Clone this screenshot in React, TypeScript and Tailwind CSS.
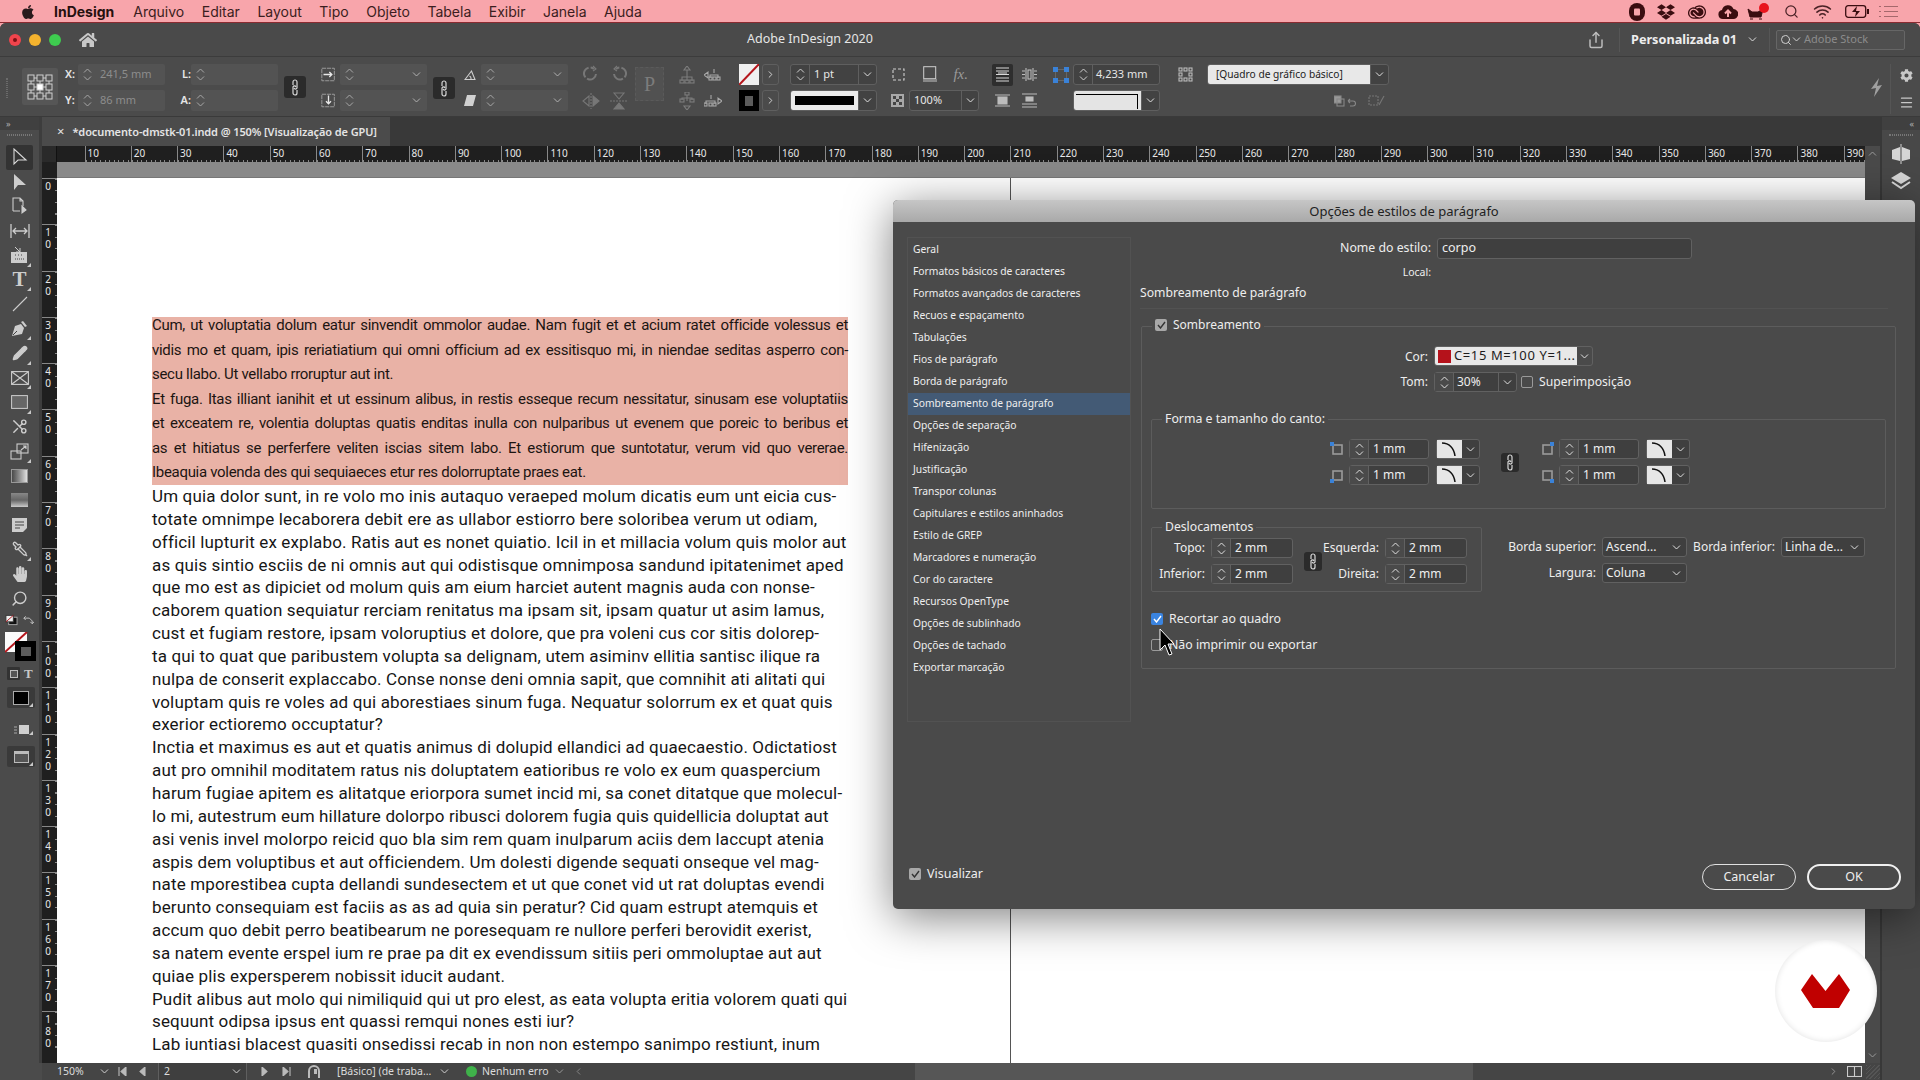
import React from 'react';
import { FaApple, FaDropbox, FaHome, FaCog, FaHandPaper } from 'react-icons/fa';
import { SiAdobecreativecloud } from 'react-icons/si';
import { Wifi, Search, Scissors, Pipette, Share, Pencil, ChevronLeft, ChevronRight, Menu } from 'lucide-react';

const Up = ({ c = '#d0d0d0' }: { c?: string }) => (
  <svg width="9" height="5" viewBox="0 0 9 5" fill="none" stroke={c} strokeWidth="1"><path d="M1 4.5 4.5 1 8 4.5" /></svg>
);
const Down = ({ c = '#d0d0d0' }: { c?: string }) => (
  <svg width="9" height="5" viewBox="0 0 9 5" fill="none" stroke={c} strokeWidth="1"><path d="M1 .5 4.5 4 8 .5" /></svg>
);
const Stepper = ({ c }: { c?: string }) => (
  <div className="flex h-full w-[18px] shrink-0 flex-col items-center justify-center gap-[3px]">
    <Up c={c} /><Down c={c} />
  </div>
);
const LinkIcon = () => (
  <svg width="8" height="17" viewBox="0 0 8 17" fill="none" stroke="#d8d8d8" strokeWidth="1.2">
    <path d="M2 6V3a2 2 0 0 1 4 0v6a1.6 1.6 0 0 1-3 0" />
    <path d="M6 11v3a2 2 0 0 1-4 0V8a1.6 1.6 0 0 1 3 0" />
  </svg>
);
const LinkBtn = ({ className }: { className: string }) => (
  <div className={`flex items-center justify-center rounded-[3px] bg-[#2b2b2b] ${className}`}><LinkIcon /></div>
);

/* top control bar */
const CtlField = ({ value, dd }: { value?: string; dd?: boolean }) => (
  <div className="flex h-[21px] w-[87px] items-center rounded-[2px] bg-[#535353]">
    <Stepper c="#a8a8a8" />
    <span className="ml-[4px] flex-1 text-[11px] text-[#8d8d8d]">{value}</span>
    {dd && <span className="mr-[6px]"><Down c="#b0b0b0" /></span>}
  </div>
);
const DarkField = ({ children, className }: { children: React.ReactNode; className: string }) => (
  <div className={`flex h-[21px] items-center overflow-hidden rounded-[3px] border border-[#5f5f5f] bg-[#424242] ${className}`}>{children}</div>
);
const DdEnd = ({ className = 'w-[18px]' }: { className?: string }) => (
  <div className={`flex h-full shrink-0 items-center justify-center border-l border-[#5f5f5f] ${className}`}><Down c="#e0e0e0" /></div>
);
const RefPoint = () => (
  <svg width="26" height="26" viewBox="0 0 26 26" fill="none" stroke="#cfcfcf" strokeWidth="1">
    {[1, 10, 19].map((y) => [1, 10, 19].map((x) => (
      <rect key={`${x}-${y}`} x={x} y={y} width="6" height="6" fill={x === 10 && y === 10 ? '#fff' : 'none'} />
    )))}
    <path d="M7 4h3M16 4h3M7 13h3M16 13h3M7 22h3M16 22h3M4 7v3M13 7v3M22 7v3M4 16v3M13 16v3M22 16v3" />
  </svg>
);
const G = ({ children, w = 18, h = 18, vb = '0 0 18 18', c = '#a0a0a0', f = 'none' }: { children: React.ReactNode; w?: number; h?: number; vb?: string; c?: string; f?: string }) => (
  <svg width={w} height={h} viewBox={vb} fill={f} stroke={c} strokeWidth="1.1">{children}</svg>
);
const ArrowBtn = () => (
  <div className="ml-[3px] flex h-[21px] w-[17px] items-center justify-center rounded-[3px] border border-[#5f5f5f]"><ChevronRight size={11} color="#ddd" /></div>
);

const ControlBar = () => (
  <div className="flex h-[60px] shrink-0 items-start border-b border-[#3a3a3a] bg-[#4b4b4b] pt-[7px] text-[#e6e6e6]">
    <div className="ml-[6px] mt-[14px] h-[20px] w-[2px] border-x border-dotted border-[#6a6a6a]" />
    <div className="ml-[14px] mt-[4px] flex h-[37px] w-[36px] items-center justify-center rounded-[2px] bg-[#565656]"><RefPoint /></div>
    <div className="ml-[7px] flex flex-col gap-[5px]">
      <div className="flex items-center"><span className="w-[13px] text-[11px] font-semibold">X:</span><CtlField value="241,5 mm" /></div>
      <div className="flex items-center"><span className="w-[13px] text-[11px] font-semibold">Y:</span><CtlField value="86 mm" /></div>
    </div>
    <div className="ml-[10px] flex flex-col gap-[5px]">
      <div className="flex items-center"><span className="w-[16px] text-right text-[11px] font-semibold">L:</span><CtlField /></div>
      <div className="flex items-center"><span className="w-[16px] text-right text-[11px] font-semibold">A:</span><CtlField /></div>
    </div>
    <LinkBtn className="ml-[6px] mt-[12px] h-[22px] w-[22px]" />
    <div className="ml-[15px] flex flex-col gap-[5px]">
      <div className="flex items-center">
        <span className="flex w-[19px]"><G w={15} h={15}><rect x="1" y="1.5" width="15" height="15" strokeDasharray="5 1" /><path d="M3 9h10M10 6l3 3-3 3" stroke="#e8e8e8" strokeWidth="1.6" /></G></span>
        <CtlField dd />
      </div>
      <div className="flex items-center">
        <span className="flex w-[19px]"><G w={15} h={15}><rect x="1" y="1.5" width="15" height="15" strokeDasharray="5 1" /><path d="M9 3v10M6 10l3 3 3-3" stroke="#e8e8e8" strokeWidth="1.6" /></G></span>
        <CtlField dd />
      </div>
    </div>
    <LinkBtn className="ml-[6px] mt-[13px] h-[22px] w-[22px]" />
    <div className="ml-[9px] flex flex-col gap-[5px]">
      <div className="flex items-center">
        <span className="flex w-[17px]"><G w={12} h={12} vb="0 0 12 12" c="#cfcfcf"><path d="M1 10.5h10L7.5 2 1 10.5ZM7 10a3 3 0 0 0-1.5-3" /></G></span>
        <CtlField dd />
      </div>
      <div className="flex items-center">
        <span className="flex w-[17px]"><svg width="12" height="11" viewBox="0 0 12 11"><path d="M3 0h9L9 11H0Z" fill="#d0d0d0" /></svg></span>
        <CtlField dd />
      </div>
    </div>
    <div className="ml-[11px] flex w-[52px] flex-col gap-[5px]">
      <div className="flex h-[21px] items-center justify-between px-[2px]">
        <G w={20} h={20} vb="0 0 20 20" c="#777"><path d="M15 9a6 6 0 1 1-2-5" strokeWidth="2" strokeDasharray="12 2" /><path d="M12 1l3 3-3 2" /></G>
        <G w={20} h={20} vb="0 0 20 20" c="#777"><path d="M5 9a6 6 0 1 0 2-5" strokeWidth="2" strokeDasharray="12 2" /><path d="M8 1 5 4l3 2" /></G>
      </div>
      <div className="flex h-[21px] items-center justify-between px-[2px]">
        <G w={20} h={18} vb="0 0 20 18" c="#777"><path d="M10 1v16" strokeDasharray="2 1" /><path d="M8 4v10L2 9Z" /><path d="M12 4v10l6-5Z" fill="#777" /></G>
        <G w={20} h={18} vb="0 0 20 18" c="#777"><path d="M1 9h18" strokeDasharray="2 1" /><path d="M5 1h10l-5 6Z" /><path d="M5 17h10l-5-6Z" fill="#777" /></G>
      </div>
    </div>
    <div className="ml-[4px] mt-[3px] flex h-[34px] w-[29px] items-center justify-center border border-dashed border-[#5a5a5a] bg-[#515151] font-['Liberation_Serif',serif] text-[20px] text-[#7c7c7c]">P</div>
    <div className="ml-[10px] flex w-[53px] flex-col gap-[5px]">
      <div className="flex h-[21px] items-center justify-between px-[5px]">
        <G w={16} h={18} vb="0 0 16 18" c="#7d7d7d"><path d="M8 0l3 4H5ZM8 4v5M3 15V11h10v4M8 9v6" /><rect x="1" y="14" width="4" height="3" /><rect x="6" y="14" width="4" height="3" /><rect x="11" y="14" width="4" height="3" /></G>
        <G w={18} h={14} vb="0 0 18 14" c="#a8a8a8"><path d="M0 7l4-3v6ZM10 1v4M6 10V7h8v3" /><rect x="5" y="9" width="3" height="3" /><rect x="9" y="9" width="3" height="3" /><rect x="13" y="9" width="3" height="3" /></G>
      </div>
      <div className="flex h-[21px] items-center justify-between px-[5px]">
        <G w={16} h={18} vb="0 0 16 18" c="#7d7d7d"><rect x="6" y="0" width="4" height="3" /><path d="M3 8V6h10v2M8 3v6" /><rect x="1" y="7" width="4" height="3" /><rect x="11" y="7" width="4" height="3" /><path d="M8 18l3-4H5Z" /></G>
        <G w={18} h={14} vb="0 0 18 14" c="#a8a8a8"><path d="M18 7l-4-3v6ZM7 1v4M2 10V7h9v3" /><rect x="0" y="9" width="3" height="3" /><rect x="5" y="9" width="3" height="3" /><rect x="9" y="9" width="3" height="3" /></G>
      </div>
    </div>
    <div className="ml-[12px] flex flex-col gap-[5px]">
      <div className="flex items-center">
        <svg width="20" height="21" viewBox="0 0 20 21"><rect width="20" height="21" fill="#f0f0f0" /><path d="M0 21 20 0" stroke="#b5161c" strokeWidth="2" /></svg>
        <ArrowBtn />
      </div>
      <div className="flex items-center">
        <div className="flex h-[21px] w-[20px] items-center justify-center bg-black"><div className="h-[10px] w-[8px] bg-[#5b5b5b]" /></div>
        <ArrowBtn />
      </div>
    </div>
    <div className="ml-[11px] flex flex-col gap-[5px]">
      <DarkField className="w-[87px]"><div className="flex h-full border-r border-[#5f5f5f]"><Stepper /></div><span className="ml-[4px] flex-1 text-[11px]">1 pt</span><DdEnd /></DarkField>
      <DarkField className="w-[87px]"><div className="flex h-full flex-1 items-center bg-[#eaeaea] px-[4px]"><div className="h-[9px] w-full bg-black" /></div><DdEnd /></DarkField>
    </div>
    <div className="ml-[10px] flex w-[93px] flex-col gap-[5px]">
      <div className="flex h-[21px] items-center justify-between px-[4px]">
        <G w={16} h={16} vb="0 0 16 16" c="#cfcfcf"><rect x="2" y="2" width="11" height="11" strokeDasharray="3 2" /></G>
        <svg width="14" height="17" viewBox="0 0 14 17"><rect x=".7" y=".7" width="12" height="12" fill="none" stroke="#cfcfcf" /><rect y="13" width="14" height="3" fill="#888" /></svg>
        <span className="mr-[8px] font-['Liberation_Serif',serif] text-[15px] italic text-[#9a9a9a]">fx.</span>
      </div>
      <div className="flex items-center">
        <svg width="13" height="13" viewBox="0 0 13 13" className="ml-[4px]"><rect width="13" height="13" fill="#a8a8a8" /><rect x="2" y="2" width="3" height="3" fill="#444" /><rect x="8" y="2" width="3" height="3" fill="#444" /><rect x="5" y="5" width="3" height="3" fill="#444" /><rect x="2" y="8" width="3" height="3" fill="#444" /><rect x="8" y="8" width="3" height="3" fill="#444" /></svg>
        <DarkField className="ml-[5px] w-[70px]"><span className="ml-[4px] flex-1 text-[11px]">100%</span><DdEnd className="w-[17px]" /></DarkField>
      </div>
    </div>
    <div className="ml-[12px] flex w-[53px] flex-col gap-[5px]">
      <div className="flex h-[21px] items-center">
        <div className="flex h-[22px] w-[21px] items-center justify-center rounded-[2px] bg-[#2e2e2e]"><G w={15} h={15} vb="0 0 15 15" c="#d8d8d8"><path d="M1 1h13M1 14h13M1 4h13M1 7.5h13M1 11h13M3 6h9" /></G></div>
        <span className="ml-[9px]"><G w={15} h={15} vb="0 0 15 15" c="#bcbcbc"><path d="M4 1v13M11 1v13M0 4h3M0 7.5h3M0 11h3M12 4h3M12 7.5h3M12 11h3" /><rect x="6" y="3" width="3" height="9" /></G></span>
      </div>
      <div className="flex h-[21px] items-center">
        <span className="ml-[3px]"><G w={15} h={15} vb="0 0 15 15" c="#bcbcbc"><path d="M0 2h15M0 13h15" /><rect x="3" y="4" width="9" height="7" fill="#bcbcbc" /></G></span>
        <span className="ml-[12px]"><G w={15} h={15} vb="0 0 15 15" c="#bcbcbc"><path d="M0 1h15M0 11h15M0 14h15" /><rect x="4" y="4" width="7" height="4" fill="#bcbcbc" /></G></span>
      </div>
    </div>
    <div className="ml-[8px] flex w-[107px] flex-col gap-[5px]">
      <div className="flex items-center justify-between">
        <svg width="16" height="16" viewBox="0 0 16 16"><rect x="2.5" y="2.5" width="11" height="11" fill="none" stroke="#666" /><rect width="5" height="5" fill="#3a82d8" /><rect x="11" width="5" height="5" fill="#3a82d8" /><rect y="11" width="5" height="5" fill="#3a82d8" /><rect x="11" y="11" width="5" height="5" fill="#3a82d8" /></svg>
        <DarkField className="w-[87px]"><div className="flex h-full border-r border-[#5f5f5f]"><Stepper /></div><span className="ml-[3px] text-[11px]">4,233 mm</span></DarkField>
      </div>
      <div className="flex justify-end">
        <DarkField className="w-[87px]"><div className="relative h-full flex-1 bg-[#e4e4e4]"><div className="ml-[2px] mt-[3px] h-[15px] w-[62px] border-r border-t border-black" /></div><DdEnd /></DarkField>
      </div>
    </div>
    <div className="ml-[18px] flex flex-col gap-[5px]">
      <div className="flex items-center">
        <G w={16} h={16} vb="0 0 16 16" c="#bbb"><rect x="1" y="1" width="3" height="3" /><rect x="6" y="1" width="3" height="3" /><rect x="11" y="1" width="3" height="3" /><rect x="1" y="6" width="3" height="3" /><rect x="11" y="6" width="3" height="3" /><rect x="1" y="11" width="3" height="3" /><rect x="6" y="11" width="3" height="3" /><rect x="11" y="11" width="3" height="3" /></G>
        <DarkField className="ml-[13px] w-[182px]"><span className="flex h-full flex-1 items-center whitespace-nowrap bg-[#e8e8e8] pl-[8px] text-[10.2px] text-[#222]">[Quadro de gráfico básico]</span><DdEnd /></DarkField>
      </div>
      <div className="flex h-[21px] items-center justify-end gap-[12px] pr-[4px]">
        <G w={22} h={12} vb="0 0 22 12" c="#888"><rect x="0" y="1" width="7" height="7" fill="#999" /><rect x="3" y="4" width="7" height="7" /><path d="M14 6h5a2.5 2.5 0 0 1 0 5h-3M14 6l2-2M14 6l2 2" /></G>
        <G w={17} h={12} vb="0 0 17 12" c="#777"><rect x="1" y="1" width="9" height="9" strokeDasharray="2 1" /><path d="M16 1l-5 9" /></G>
      </div>
    </div>
    <div className="flex flex-1 justify-end pr-[6px] pt-[14px]">
      <svg width="11" height="19" viewBox="0 0 11 19"><path d="M8 0 0 11l5-1-2 9 8-12-5 1Z" fill="#a0a0a0" /></svg>
    </div>
    <div className="ml-[2px] flex h-[50px] w-[30px] flex-col items-center justify-center gap-[13px] self-start border-l border-[#555] pl-[2px]">
      <FaCog size={13} color="#c8c8c8" />
      <Menu size={15} color="#c8c8c8" />
    </div>
  </div>
);

/* title and menu */
const MenuBar = () => (
  <div className="flex h-[23px] shrink-0 items-center border-b border-[#8a2a30] bg-[#f8a5ab] pt-[1px] font-['Inter',sans-serif] text-[14px] text-[#3b1d20]">
    <FaApple size={16} color="#2a1a1c" className="ml-[20px]" />
    <span className="ml-[18px] font-bold text-[#26100f]">InDesign</span>
    <span className="ml-[19px]">Arquivo</span>
    <span className="ml-[17.5px]">Editar</span>
    <span className="ml-[17.5px]">Layout</span>
    <span className="ml-[17.5px]">Tipo</span>
    <span className="ml-[17.5px]">Objeto</span>
    <span className="ml-[17.5px]">Tabela</span>
    <span className="ml-[17.5px]">Exibir</span>
    <span className="ml-[17.5px]">Janela</span>
    <span className="ml-[17.5px]">Ajuda</span>
    <div className="ml-auto flex items-center">
      <svg width="16" height="18" viewBox="0 0 16 18"><rect width="16" height="18" rx="8" fill="#3a0d10" /><rect x="5" y="5.5" width="6" height="7" rx="1" fill="#f8a5ab" /></svg>
      <FaDropbox size={18} color="#3a0d10" className="ml-[12px]" />
      <SiAdobecreativecloud size={18} color="#3a0d10" className="ml-[13px]" />
      <svg width="20" height="16" viewBox="0 0 20 16" className="ml-[12px]"><path d="M5 15a4.5 4.5 0 0 1-1-8.9A6 6 0 0 1 15.5 5 5 5 0 0 1 15 15Z" fill="#3a0d10" /><path d="M10 13V7M7 9.5 10 6.5 13 9.5" stroke="#f8a5ab" strokeWidth="2" fill="none" /></svg>
      <div className="relative ml-[9px] h-[16px] w-[22px]">
        <svg width="20" height="14" viewBox="0 0 20 14" className="mt-[2px]"><path d="M1 3l4 3h6l5-3-2 8H3ZM3 13h3M12 13h3" stroke="#3a0d10" fill="#3a0d10" strokeWidth="1" /></svg>
        <div className="absolute right-0 top-[-1px] h-[10px] w-[10px] rounded-full bg-[#e8141c]" />
      </div>
      <Search size={15} color="#4a2226" className="ml-[15px]" />
      <Wifi size={19} color="#4a2226" className="ml-[14px]" />
      <svg width="24" height="13" viewBox="0 0 24 13" className="ml-[13px]"><rect x=".7" y=".7" width="20" height="11.6" rx="2.5" fill="none" stroke="#3a0d10" strokeWidth="1.3" /><rect x="22" y="4" width="2" height="5" fill="#3a0d10" /><path d="M12 1 7 7h4l-1 5 5-6h-4l1-5Z" fill="#3a0d10" /></svg>
      <svg width="19" height="13" viewBox="0 0 19 13" className="ml-[10px] mr-[22px]" stroke="#a5686c"><path d="M0 1.5h2M5 1.5h14M0 6.5h2M5 6.5h14M0 11.5h2M5 11.5h14" /></svg>
    </div>
  </div>
);
const TitleBar = () => (
  <div className="flex h-[34px] shrink-0 items-center border-b border-[#3c3c3c] bg-[#4a4a4a] text-[#e6e6e6]">
    <div className="ml-[9px] flex h-[12px] w-[12px] items-center justify-center rounded-full bg-[#f0444c]"><div className="h-[4px] w-[4px] rounded-full bg-[#7a1015]" /></div>
    <div className="ml-[8px] h-[12px] w-[12px] rounded-full bg-[#f4b32e]" />
    <div className="ml-[8px] h-[12px] w-[12px] rounded-full bg-[#3ecb4f]" />
    <FaHome size={18} color="#c8c8c8" className="ml-[18px]" />
    <span className="ml-[643px] w-[140px] whitespace-nowrap text-center text-[12.5px]">Adobe InDesign 2020</span>
    <Share size={18} color="#bdbdbd" className="ml-[707px]" />
    <div className="ml-[14px] h-[24px] w-px bg-[#565656]" />
    <span className="ml-[11px] w-[106px] whitespace-nowrap text-[12.7px] font-bold text-[#eee]">Personalizada 01</span>
    <span className="ml-[11px]"><Down c="#ddd" /></span>
    <div className="ml-[12px] h-[24px] w-px bg-[#565656]" />
    <div className="ml-[6px] flex h-[20px] w-[129px] items-center rounded-[2px] border border-[#666] bg-[#4f4f4f] pl-[3px]">
      <Search size={12} color="#cfcfcf" /><Down c="#cfcfcf" />
      <span className="ml-[3px] text-[11px] text-[#8c8c8c]">Adobe Stock</span>
    </div>
  </div>
);

/* left tool column */
const Fl = '#cdcdcd';
const tools: { n: React.ReactNode; c?: boolean; sel?: boolean }[] = [
  { sel: true, n: <G w={16} h={18} vb="0 0 16 18" c="#d8d8d8"><path d="M2 1v15l4-4h8Z" /></G> },
  { n: <svg width="16" height="18" viewBox="0 0 16 18"><path d="M2 1v16l4-5h8Z" fill={Fl} /></svg> },
  { n: <G w={17} h={18} vb="0 0 17 18" c={Fl}><path d="M2 14V1h7l3 3v5M9 1v3h3M2 14h7" /><path d="M11 9v7l4-3Z" fill={Fl} /></G> },
  { n: <G w={20} h={14} vb="0 0 20 14" c={Fl}><path d="M1 0v14M19 0v14M3 7h14M6 4 3 7l3 3M14 4l3 3-3 3" strokeWidth="1.3" /></G> },
  { c: true, n: <svg width="17" height="16" viewBox="0 0 17 16"><rect x="0" y="5" width="16" height="11" fill={Fl} /><path d="M4 8h1M7 8h1M10 8h1M4 12h9" stroke="#444" strokeDasharray="1 1" /><path d="M4 0l5 5M9 1v4H5" stroke={Fl} fill="none" /></svg> },
  { c: true, n: <span className="font-['Liberation_Serif',serif] text-[21px] font-bold leading-none text-[#cdcdcd]">T</span> },
  { n: <G w={16} h={16} vb="0 0 16 16" c={Fl}><path d="M1 15 15 1" strokeWidth="1.1" /></G> },
  { c: true, n: <svg width="17" height="17" viewBox="0 0 17 17"><path d="M1 16 4 6l6-2 3 4-2 6Z" fill={Fl} /><path d="M10 2l2-1 4 5-2 1Z" fill={Fl} /><path d="M2 15l4-4" stroke="#444" /></svg> },
  { c: true, n: <Pencil size={16} color={Fl} fill={Fl} /> },
  { c: true, n: <G w={18} h={14} vb="0 0 18 14" c={Fl}><rect x=".6" y=".6" width="16.8" height="12.8" /><path d="M1 1l16 12M17 1 1 13" /></G> },
  { c: true, n: <svg width="17" height="14" viewBox="0 0 17 14"><rect x=".6" y=".6" width="15.8" height="12.8" fill="#666" stroke={Fl} /></svg> },
  { n: <Scissors size={17} color={Fl} className="scale-x-[-1]" /> },
  { c: true, n: <G w={19} h={17} vb="0 0 19 17" c={Fl}><rect x="7" y="1" width="11" height="9" /><rect x="1" y="8" width="10" height="8" /><path d="M11 7l5-4M13 3h3v3" /></G> },
  { n: <div className="h-[14px] w-[17px] border border-[#999] bg-gradient-to-r from-[#4a4a4a] to-[#e0e0e0]" /> },
  { n: <div className="h-[14px] w-[17px] bg-gradient-to-b from-[#888] via-[#666] to-[#ccc]" /> },
  { n: <svg width="15" height="14" viewBox="0 0 15 14"><path d="M0 0h15v10l-4 4H0Z" fill={Fl} /><path d="M3 4h9M3 7h9M3 10h5" stroke="#444" /></svg> },
  { c: true, n: <Pipette size={16} color={Fl} className="scale-x-[-1] scale-y-100" /> },
  { n: <FaHandPaper size={16} color={Fl} /> },
  { n: <Search size={17} color={Fl} className="scale-x-[-1] scale-y-100" /> },
];
const Corner = () => <div className="absolute bottom-[1px] right-[2px] h-0 w-0 border-b-[4px] border-l-[4px] border-b-[#c8c8c8] border-l-transparent" />;
const Toolbar = () => (
  <div className="flex w-[42px] shrink-0 flex-col border-r-[3px] border-[#3d3d3d] bg-[#4b4b4b]">
    <div className="flex h-[13px] items-center bg-[#404040] pl-[6px] text-[9px] leading-none text-[#b0b0b0]">»</div>
    <div className="mx-[7px] mt-[4px] h-[2px] border-y border-dotted border-[#777]" />
    <div className="mt-[9px] flex flex-col">
      {tools.map((t, i) => (
        <div key={i} className={`relative mx-[6px] flex h-[24.5px] w-[27px] items-center justify-center rounded-[2px] ${t.sel ? 'bg-[#333]' : ''}`}>
          {t.n}{t.c && <Corner />}
        </div>
      ))}
    </div>
    <div className="mt-[3.5px] flex h-[12px] items-center px-[5px]">
      <svg width="14" height="12" viewBox="0 0 14 12"><rect x="4" y="3" width="9" height="8" fill="#111" stroke="#aaa" /><rect x="1" y="1" width="8" height="7" fill="#eee" stroke="#333" /><path d="M1 8l8-7" stroke="#b5161c" /></svg>
      <svg width="13" height="12" viewBox="0 0 13 12" fill="none" stroke="#c8c8c8" className="ml-[4px]"><path d="M2 4h6l3 3v3M2 4l2-2M2 4l2 2M11 10 9 8M11 10l2-2" /></svg>
    </div>
    <div className="relative mt-[6px] h-[30px] w-[33px]">
      <svg width="24" height="22" viewBox="0 0 24 22" className="ml-[5px]"><rect width="22" height="20" fill="#fbfbfb" /><path d="M0 20 22 0" stroke="#b5161c" strokeWidth="2" /></svg>
      <div className="absolute left-[15px] top-[9px] flex h-[20px] w-[21px] items-center justify-center bg-black"><div className="h-[9px] w-[10px] bg-[#5c5c5c]" /></div>
    </div>
    <div className="mt-[5px] flex h-[13px] items-center pl-[7px]">
      <div className="flex h-[13px] w-[13px] items-center justify-center rounded-[1px] bg-[#333]"><div className="h-[8px] w-[8px] border border-[#bbb] bg-[#555]" /></div>
      <span className="ml-[4px] font-['Liberation_Serif',serif] text-[13px] font-bold leading-none text-[#c8c8c8]">T</span>
    </div>
    <div className="relative ml-[7px] mt-[7px] flex h-[21px] w-[28px] items-center justify-center rounded-[2px] bg-[#3a3a3a]"><div className="h-[14px] w-[16px] border border-[#aaa] bg-black" /><Corner /></div>
    <div className="relative ml-[7px] mt-[14px] flex h-[14px] w-[28px] items-center justify-center"><svg width="15" height="11" viewBox="0 0 15 11"><rect x="5" y="1" width="10" height="9" fill="#cfcfcf" /><path d="M0 3h3M0 6h3M0 9h3" stroke="#aaa" /></svg><Corner /></div>
    <div className="relative ml-[7px] mt-[10px] flex h-[21px] w-[28px] items-center justify-center rounded-[2px] bg-[#3a3a3a]"><div className="h-[12px] w-[15px] border border-[#bbb] border-t-[3px] bg-[#555]" /><Corner /></div>
  </div>
);

/* rulers */
const hLabels = Array.from({ length: 39 }, (_, i) => (i + 1) * 10);
const vLabels = Array.from({ length: 19 }, (_, i) => i * 10);
const TopRuler = () => (
  <div className="flex h-[16px] shrink-0 overflow-hidden bg-[#1f1f1f] text-[10px] text-[#e8e8e8]">
    <div className="h-full w-[15px] shrink-0 border-r border-[#111] bg-[#2a2a2a]" />
    <div className="h-full w-[27.5px] shrink-0" />
    {hLabels.map((n) => (
      <div key={n} className="relative h-full w-[46.3px] shrink-0 border-l border-[#888] pl-[2px] leading-[14px]">
        {n}
        <div className="absolute bottom-0 left-0 h-[2px] w-full bg-[repeating-linear-gradient(90deg,#8a8a8a_0,#8a8a8a_1px,transparent_1px,transparent_4.63px)]" />
      </div>
    ))}
  </div>
);
const SideRuler = () => (
  <div className="flex w-[15px] shrink-0 flex-col overflow-hidden bg-[#1f1f1f] text-[10px] text-[#e8e8e8]">
    <div className="h-[16px] shrink-0" />
    {vLabels.map((n) => (
      <div key={n} className="relative h-[46.3px] shrink-0 border-t border-[#888]">
        <div className="w-[11px] leading-[11px] tracking-[-2.2px] [text-orientation:upright] [writing-mode:vertical-rl]">{n}</div>
        <div className="absolute right-0 top-0 h-full w-[2px] bg-[repeating-linear-gradient(180deg,#8a8a8a_0,#8a8a8a_1px,transparent_1px,transparent_11.5px)]" />
      </div>
    ))}
  </div>
);

/* document text */
const shaded = [
  ['Cum, ut voluptatia dolum eatur sinvendit ommolor audae. Nam fugit et et acium ratet officide volessus et', true],
  ['vidis mo et quam, ipis reriatiatium qui omni officium ad ex essitisquo mi, in niendae seditas asperro con-', true],
  ['secu llabo. Ut vellabo rroruptur aut int.', false],
  ['Et fuga. Itas illiant ianihit et ut essinum alibus, in restis esseque recum nessitatur, sinusam ese voluptatiis', true],
  ['et exceatem re, volentia doluptas quatis enditas inulla con nulparibus ut evenem que poreic to beribus et', true],
  ['as et hitiatus se perferfere veliten iscias sitem labo. Et estiorum que suntotatur, verum vid quo vererae.', true],
  ['Ibeaquia volenda des qui sequiaeces etur res dolorruptate praes eat.', false],
] as const;
const body = [
  'Um quia dolor sunt, in re volo mo inis autaquo veraeped molum dicatis eum unt eicia cus-',
  'totate omnimpe lecaborera debit ere as ullabor estiorro bere soloribea verum ut odiam,',
  'officil lupturit ex explabo. Ratis aut es nonet quiatio. Icil in et millacia volum quis molor aut',
  'as quis sintio esciis de ni omnis aut qui odistisque omnimposa sandund ipitatenimet aped',
  'que mo est as dipiciet od molum quis am eium harciet autent magnis auda con nonse-',
  'caborem quation sequiatur rerciam renitatus ma ipsam sit, ipsam quatur ut asim lamus,',
  'cust et fugiam restore, ipsam voloruptius et dolore, que pra voleni cus cor sitis dolorep-',
  'ta qui to quat que paribustem volupta sa delignam, utem asiminv ellitia santisc ilique ra',
  'nulpa de conserit explaccabo. Conse nonse deni omnia sapit, que comnihit ati alitati qui',
  'voluptam quis re voles ad qui aborestiaes sinum fuga. Nequatur solorrum ex et quat quis',
  'exerior ectioremo occuptatur?',
  'Inctia et maximus es aut et quatis animus di dolupid ellandici ad quaecaestio. Odictatiost',
  'aut pro omnihil moditatem ratus nis doluptatem eatioribus re volo ex eum quaspercium',
  'harum fugiae apitem es alitatque eriorpora sumet incid mi, sa conet ditatque que molecul-',
  'lo mi, autestrum eum hillature dolorpo ribusci dolorem fugia quis quidellicia doluptat aut',
  'asi venis invel molorpo reicid quo bla sim rem quam inulparum aciis dem laccupt atenia',
  'aspis dem voluptibus et aut officiendem. Um dolesti digende sequati onseque vel mag-',
  'nate mporestibea cupta dellandi sundesectem et ut que conet vid ut rat doluptas evendi',
  'berunto consequiam est faciis as as ad quia sin peratur? Cid quam estrupt atemquis et',
  'accum quo debit perro beatibearum ne poresequam re nullore perferi berovidit exerist,',
  'sa natem evente erspel ium re prae pa dit ex evendissum sitiis peri ommoluptae aut aut',
  'quiae plis expersperem nobissit iducit audant.',
  'Pudit alibus aut molo qui nimiliquid qui ut pro elest, as eata volupta eritia volorem quati qui',
  'sequunt odipsa ipsus ent quassi remqui nones esti iur?',
  'Lab iuntiasi blacest quasiti onsedissi recab in non non estempo sanimpo restiunt, inum',
];
const Page = () => (
  <div className="flex min-h-0 flex-1 overflow-hidden bg-white">
    <div className="h-full w-[954px] shrink-0 overflow-hidden border-r border-[#555] pl-[95px] pt-[139px] font-['Roboto',sans-serif]">
      <div className="flow-root h-[168px] w-[696px] bg-[#e9b2a6] text-[15px] leading-[24.5px] tracking-[-0.3px] text-[#1c1512]">
        <div className="whitespace-nowrap">
          {shaded.map(([t, j], i) => (
            <div key={i} className={`first:-mt-[4px] ${j ? 'whitespace-normal text-justify [text-align-last:justify]' : ''}`}>{t}</div>
          ))}
        </div>
      </div>
      <div className="whitespace-nowrap text-[17px] leading-[22.85px] tracking-[0.15px] text-[#161616]">
        {body.map((t, i) => <div key={i}>{t}</div>)}
      </div>
    </div>
    <div className="flex-1" />
  </div>
);

/* dialog */
const Spin = ({ v, className = 'w-[80px]' }: { v: string; className?: string }) => (
  <div className={`flex h-[20px] items-center rounded-[3px] border border-[#616161] bg-[#3f3f3f] text-[12px] ${className}`}>
    <div className="flex h-full border-r border-[#616161] bg-[#4a4a4a]"><Stepper c="#e0e0e0" /></div>
    <span className="ml-[4px] flex-1">{v}</span>
  </div>
);
const CornerDd = () => (
  <div className="ml-[7px] flex h-[20px] w-[44px] items-center rounded-[3px] border border-[#616161] bg-[#3f3f3f]">
    <div className="flex h-full w-[25px] items-center justify-center bg-[#e6e6e6]">
      <svg width="17" height="16" viewBox="0 0 17 16" fill="none" stroke="#111" strokeWidth="1.5"><path d="M1 2c7 0 12 5 13 13" /></svg>
    </div>
    <div className="flex flex-1 justify-center"><Down c="#e0e0e0" /></div>
  </div>
);
const CornerIc = ({ x, y }: { x: number; y: number }) => (
  <svg width="14" height="15" viewBox="0 0 14 15" className="mr-[5px] shrink-0">
    <rect x="3" y="3" width="9" height="9" fill="none" stroke="#9a9a9a" strokeWidth="1.6" />
    <rect x={x} y={y} width="4" height="4" fill="#3a82d8" />
  </svg>
);
const Sel = ({ v, className }: { v: string; className: string }) => (
  <div className={`flex h-[20px] items-center justify-between rounded-[3px] border border-[#616161] bg-[#3f3f3f] pl-[3px] pr-[5px] text-[12px] ${className}`}>
    <span>{v}</span><Down c="#e0e0e0" />
  </div>
);
const Check = ({ on, blue }: { on?: boolean; blue?: boolean }) => (
  <div className={`flex h-[12px] w-[12px] shrink-0 items-center justify-center rounded-[2px] ${blue ? 'bg-[#3a84e0]' : on ? 'bg-[#a8a8a8]' : 'border border-[#9a9a9a]'}`}>
    {on && <svg width="9" height="8" viewBox="0 0 9 8" fill="none" stroke={blue ? '#fff' : '#333'} strokeWidth="1.4"><path d="M1 4l2.5 3L8 1" /></svg>}
  </div>
);
const items = ['Geral', 'Formatos básicos de caracteres', 'Formatos avançados de caracteres', 'Recuos e espaçamento', 'Tabulações', 'Fios de parágrafo', 'Borda de parágrafo', 'Sombreamento de parágrafo', 'Opções de separação', 'Hifenização', 'Justificação', 'Transpor colunas', 'Capitulares e estilos aninhados', 'Estilo de GREP', 'Marcadores e numeração', 'Cor do caractere', 'Recursos OpenType', 'Opções de sublinhado', 'Opções de tachado', 'Exportar marcação'];

const Dialog = () => (
  <div className="absolute left-[893px] top-[200px] flex h-[709px] w-[1022px] flex-col overflow-hidden rounded-[5px] bg-[#4a4a4a] font-['Noto_Sans',sans-serif] text-[12px] text-[#eeeeee] shadow-[0_8px_45px_rgba(0,0,0,0.5)]">
    <div className="flex h-[22px] shrink-0 items-center justify-center bg-gradient-to-b from-[#c6c6c6] to-[#a9a9a9] pt-[2px] text-[13px] text-[#222]">Opções de estilos de parágrafo</div>
    <div className="relative flex flex-1">
      <div className="ml-[14px] mt-[15px] flex h-[485px] w-[224px] shrink-0 flex-col border border-[#525252] pt-[1px]">
        {items.map((t, i) => (
          <div key={t} className={`flex h-[22px] shrink-0 items-center pl-[5px] text-[10.3px] ${i === 7 ? 'bg-[#435a75]' : ''}`}>{t}</div>
        ))}
      </div>
      <div className="ml-[9px] flex w-[756px] flex-col">
        <div className="mt-[15px] flex h-[21px] items-center pt-[1px]">
          <span className="w-[291px] text-right text-[12.3px]">Nome do estilo:</span>
          <div className="ml-[6px] flex h-[21px] w-[255px] items-center rounded-[3px] border border-[#616161] bg-[#3f3f3f] pl-[4px] pt-[1px] text-[12.5px]">corpo</div>
        </div>
        <div className="mt-[7px] h-[14px] w-[291px] text-right text-[10.5px] leading-[14px]">Local:</div>
        <div className="mt-[6px] h-[16px] text-[12.2px] leading-[16px]">Sombreamento de parágrafo</div>
        <div className="mt-[7px] h-px w-[748px] bg-[#525252]" />
        <div className="relative ml-px mt-[17px] h-[343px] w-[755px] rounded-[2px] border border-[#5c5c5c]">
          <div className="absolute left-[10px] top-[-11px] flex items-center bg-[#4a4a4a] px-[3px]">
            <Check on /><span className="ml-[6px]">Sombreamento</span>
          </div>
          <div className="ml-[1px] mt-[19px] flex h-[20px] items-center">
            <span className="w-[285px] pt-[1px] text-right">Cor:</span>
            <div className="ml-[6px] flex h-[20px] w-[159px] items-center overflow-hidden rounded-[3px] border border-[#616161]">
              <div className="flex h-full w-[142px] items-center bg-[#e8e8e8] pl-[3px] text-[#1c1c1c]">
                <div className="h-[13px] w-[13px] shrink-0 bg-[#b5121b]" />
                <span className="ml-[3px] whitespace-nowrap text-[13px] tracking-[0.6px]">C=15 M=100 Y=1...</span>
              </div>
              <div className="flex flex-1 justify-center"><Down c="#e0e0e0" /></div>
            </div>
          </div>
          <div className="ml-[1px] mt-[6px] flex h-[20px] items-center">
            <span className="w-[285px] text-right">Tom:</span>
            <div className="ml-[6px] flex h-[20px] w-[83px] items-center rounded-[3px] border border-[#616161] bg-[#3f3f3f]">
              <div className="flex h-full border-r border-[#616161] bg-[#4a4a4a]"><Stepper c="#e0e0e0" /></div>
              <span className="ml-[3px] flex-1">30%</span>
              <div className="flex h-full w-[18px] items-center justify-center border-l border-[#616161]"><Down c="#e0e0e0" /></div>
            </div>
            <span className="ml-[4px]"><Check /></span>
            <span className="ml-[6px] text-[12.2px]">Superimposição</span>
          </div>
          <div className="relative ml-[9px] mt-[27px] h-[90px] w-[735px] rounded-[2px] border border-[#5c5c5c]">
            <span className="absolute left-[10px] top-[-10px] bg-[#4a4a4a] px-[3px] text-[12.3px]">Forma e tamanho do canto:</span>
            <div className="ml-[178px] mt-[19px] flex items-center">
              <div className="flex w-[150px] flex-col gap-[6px]">
                <div className="flex items-center"><CornerIc x={0} y={0} /><Spin v="1 mm" /><CornerDd /></div>
                <div className="flex items-center"><CornerIc x={0} y={11} /><Spin v="1 mm" /><CornerDd /></div>
              </div>
              <LinkBtn className="ml-[21px] h-[19px] w-[18px]" />
              <div className="ml-[21px] flex w-[150px] flex-col gap-[6px]">
                <div className="flex items-center"><CornerIc x={10} y={0} /><Spin v="1 mm" /><CornerDd /></div>
                <div className="flex items-center"><CornerIc x={10} y={11} /><Spin v="1 mm" /><CornerDd /></div>
              </div>
            </div>
          </div>
          <div className="ml-[9px] mt-[18px] flex items-start">
            <div className="relative h-[65px] w-[331px] rounded-[2px] border border-[#5c5c5c]">
              <span className="absolute left-[10px] top-[-10px] bg-[#4a4a4a] px-[3px] text-[12.2px]">Deslocamentos</span>
              <div className="mt-[10px] flex items-center">
                <div className="flex w-[141px] flex-col gap-[6px]">
                  <div className="flex items-center"><span className="w-[53px] text-right">Topo:</span><Spin v="2 mm" className="ml-[6px] w-[82px]" /></div>
                  <div className="flex items-center"><span className="w-[53px] text-right">Inferior:</span><Spin v="2 mm" className="ml-[6px] w-[82px]" /></div>
                </div>
                <LinkBtn className="ml-[11px] h-[19px] w-[18px]" />
                <div className="flex flex-col gap-[6px]">
                  <div className="flex items-center"><span className="w-[57px] text-right">Esquerda:</span><Spin v="2 mm" className="ml-[6px] w-[82px]" /></div>
                  <div className="flex items-center"><span className="w-[57px] text-right">Direita:</span><Spin v="2 mm" className="ml-[6px] w-[82px]" /></div>
                </div>
              </div>
            </div>
            <div className="ml-[7px] mt-[10px] flex flex-col gap-[6px]">
              <div className="flex items-center">
                <span className="w-[107px] text-right">Borda superior:</span>
                <Sel v="Ascend..." className="ml-[6px] w-[85px]" />
                <span className="ml-[5px] w-[83px] text-right">Borda inferior:</span>
                <Sel v="Linha de..." className="ml-[6px] w-[84px]" />
              </div>
              <div className="flex items-center">
                <span className="w-[107px] text-right">Largura:</span>
                <Sel v="Coluna" className="ml-[6px] w-[85px]" />
              </div>
            </div>
          </div>
          <div className="ml-[9px] mt-[21px] flex h-[12px] items-center"><Check on blue /><span className="ml-[6px] text-[12.3px]">Recortar ao quadro</span></div>
          <div className="ml-[9px] mt-[14px] flex h-[12px] items-center"><Check /><span className="ml-[6px] text-[12.3px]">Não imprimir ou exportar</span></div>
        </div>
      </div>
      <div className="absolute bottom-[28px] left-[16px] flex h-[14px] items-center"><Check on /><span className="ml-[6px] text-[12.5px]">Visualizar</span></div>
      <div className="absolute bottom-[19px] right-[14px] flex gap-[11px] text-[12.5px]">
        <div className="flex h-[26px] w-[94px] items-center justify-center rounded-full border-[1.5px] border-[#e0e0e0]">Cancelar</div>
        <div className="flex h-[26px] w-[94px] items-center justify-center rounded-full border-2 border-[#f0f0f0]">OK</div>
      </div>
    </div>
  </div>
);

const StatusBar = () => (
  <div className="flex h-[17px] shrink-0 items-center bg-[#454545] font-['Noto_Sans',sans-serif] text-[10.5px] text-[#dcdcdc]">
    <span className="ml-[15px] w-[43px]">150%</span>
    <Down />
    <span className="ml-[9px] flex items-center text-[#bbb]"><G w={9} h={9} vb="0 0 9 9" c="#bbb" f="#bbb"><path d="M1 0v9M8 0v9L3 4.5Z" /></G></span>
    <span className="ml-[12px] flex"><G w={7} h={9} vb="0 0 7 9" c="#bbb" f="#bbb"><path d="M6 0v9L1 4.5Z" /></G></span>
    <div className="ml-[12px] flex h-[17px] w-[89px] items-center border-x border-[#5f5f5f] bg-[#3f3f3f] pl-[5px]">
      <span className="w-[68px]">2</span><Down />
    </div>
    <span className="ml-[14px] flex"><G w={7} h={9} vb="0 0 7 9" c="#bbb" f="#bbb"><path d="M1 0v9l5-4.5Z" /></G></span>
    <span className="ml-[14px] flex"><G w={9} h={9} vb="0 0 9 9" c="#bbb" f="#bbb"><path d="M8 0v9M1 0v9l5-4.5Z" /></G></span>
    <svg width="16" height="14" viewBox="0 0 16 14" fill="none" className="ml-[16px]"><path d="M2 13V6a5 5 0 0 1 10 0v7" stroke="#bbb" strokeWidth="2" /><path d="M7 4h3v5H7Z" fill="#bbb" /></svg>
    <span className="ml-[14px] w-[94px] whitespace-nowrap">[Básico] (de traba...</span>
    <span className="ml-[9px]"><Down /></span>
    <div className="ml-[17px] h-[11px] w-[11px] rounded-full bg-[#3fb24a]" />
    <span className="ml-[5px] w-[65px] whitespace-nowrap">Nenhum erro</span>
    <span className="ml-[8px]"><Down c="#999" /></span>
    <ChevronLeft size={11} color="#888" className="ml-[9px]" />
    <div className="ml-[331px] h-full w-[558px] bg-[#565656]" />
    <div className="flex-1" />
    <ChevronRight size={11} color="#999" />
    <span className="ml-[8px] flex"><G w={15} h={11} vb="0 0 15 11" c="#ccc"><rect x=".5" y=".5" width="14" height="10" /><path d="M7.5 0v11" /></G></span>
    <div className="ml-[4px] h-[14px] w-[14px] bg-[repeating-linear-gradient(135deg,#555_0,#555_1px,transparent_1px,transparent_3px)]" />
  </div>
);

export default function App() {
  return (
    <div className="relative flex h-[1080px] w-[1920px] flex-col overflow-hidden bg-[#f8a5ab] font-['Noto_Sans',sans-serif]">
      <MenuBar />
      <div className="flex min-h-0 flex-1 flex-col overflow-hidden rounded-t-[6px] bg-[#4a4a4a]">
        <TitleBar />
        <ControlBar />
        <div className="flex min-h-0 flex-1">
          <Toolbar />
          <div className="flex min-w-0 flex-1 flex-col">
            <div className="flex h-[29px] shrink-0 bg-[#393939]">
              <div className="flex w-[348px] items-center bg-[#4b4b4b] pl-[15px] pt-[1px] text-[11px] font-semibold text-[#e4e4e4]">
                <span className="text-[13px] font-normal">×</span>
                <span className="ml-[8px] whitespace-nowrap tracking-[-0.1px]">*documento-dmstk-01.indd @ 150% [Visualização de GPU]</span>
              </div>
            </div>
            <div className="flex min-h-0 flex-1">
              <div className="flex min-w-0 flex-1 flex-col">
                <TopRuler />
                <div className="flex min-h-0 flex-1">
                  <SideRuler />
                  <div className="flex min-w-0 flex-1 flex-col">
                    <div className="h-[16px] shrink-0 border-b border-[#777] bg-[#898989]" />
                    <Page />
                  </div>
                </div>
              </div>
              <div className="flex w-[15px] shrink-0 flex-col items-center justify-between bg-[#4a4a4a] py-[5px]">
                <Up c="#999" /><Down c="#999" />
              </div>
            </div>
          </div>
          <div className="flex w-[40px] shrink-0 flex-col items-center border-l-2 border-[#383838] bg-[#484848]">
            <div className="flex h-[13px] w-full items-center justify-end bg-[#404040] pr-[6px] text-[9px] leading-none text-[#b0b0b0]">«</div>
            <div className="mt-[4px] h-[2px] w-[24px] border-y border-dotted border-[#777]" />
            <svg width="20" height="20" viewBox="0 0 20 20" className="mt-[8px]"><path d="M1 6l8-3v14l-8-2ZM19 6l-8-3v14l8-2Z" fill="#d5d5d5" /><path d="M10 0v20" stroke="#d5d5d5" /></svg>
            <svg width="20" height="18" viewBox="0 0 20 18" className="mt-[8px]"><path d="M10 0l10 6-10 6L0 6Z" fill="#d5d5d5" /><path d="M1 10l9 6 9-6" stroke="#d5d5d5" strokeWidth="2" fill="none" /></svg>
          </div>
        </div>
        <div className="flex shrink-0">
          <div className="h-[17px] w-[42px] shrink-0 bg-[#4b4b4b]" />
          <div className="min-w-0 flex-1"><StatusBar /></div>
          <div className="h-[17px] w-[40px] shrink-0 border-l-2 border-[#383838] bg-[#484848]" />
        </div>
      </div>
      <Dialog />
      <svg width="16" height="28" viewBox="0 0 16 28" className="absolute left-[1159px] top-[628px]"><path d="M1 1v21l5-5 4 10 3-1-4-10h6Z" fill="#000" stroke="#fff" strokeWidth="1" /></svg>
      <div className="absolute left-[1775px] top-[940px] flex h-[102px] w-[102px] items-center justify-center rounded-full bg-white shadow-[inset_0_0_6px_rgba(0,0,0,0.12)]">
        <svg width="50" height="35" viewBox="0 0 50 35"><path d="M0 16 11 0l13.5 17L38 0l11 16-11 18H12Z" fill="#c00000" /></svg>
      </div>
    </div>
  );
}
